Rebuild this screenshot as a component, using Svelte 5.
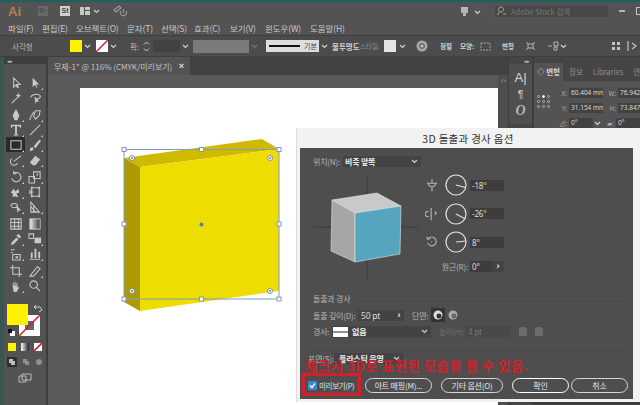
<script>
	const menus = ['파일(F)', '편집(E)', '오브젝트(O)', '문자(T)', '선택(S)', '효과(C)', '보기(V)', '윈도우(W)', '도움말(H)'];

	// s = stroked path, f = filled path, fly = has the little flyout corner
	const toolGroups = [
		[
			[
				{ s: 'M5 2v10l2.500-2.500 1.500 3 1-.5-1.500-3H12z' },
				{ f: 'M5 2v10l2.500-2.500 1.500 3 1-.5-1.500-3H12z', fly: true }
			],
			[
				{ s: 'M3 13l6-6', f: 'M10 2l1 2 2 1-2 1-1 2-1-2-2-1 2-1z' },
				{ s: 'M3 7c0-3 8-5 10-2 1 3-3 4-5 3', f: 'M7 6l5 5-3 .5-1 2.500z' }
			]
		],
		[
			[
				{ f: 'M7 2h1l3 6-2 5H6L4 8z', fly: true },
				{ s: 'M2 13c0-4 3-5 4-9M8 3l5 0-1 5-4 4-2-3z', fly: true }
			],
			[
				{ f: 'M2 2h11v3h-1l-1-1.500H8.500V12l1.500.5v1H5v-1l1.500-.5V3.500H4L3 5H2z', fly: true },
				{ s: 'M2 13L13 2', fly: true }
			],
			[
				{ s: 'M2 3h11v9H2z', on: true, fly: true },
				{ f: 'M2 14c0-3 1-4 3-4l1 2c-1 1-2 2-4 2zM6 9l6-7 2 1-6 8z', fly: true }
			],
			[
				{ s: 'M3 6a4 4 0 1 0 6 5M5 9l8-6', fly: true },
				{ f: 'M2 10l6-7 5 4-5 6H5z', fly: true }
			]
		],
		[
			[
				{ s: 'M3 9a5 5 0 1 0 2-5.500M5 1v3h3', fly: true },
				{ s: 'M1 7h6v7H1zM6 2h7v7H6zM9 6l2-2', fly: true }
			],
			[
				{ f: 'M2 8l3-4 2 3 3-3 1 4-3 1 2 4-4-1-2 1V9z', fly: true },
				{ s: 'M4 3h8v9H4zM2 6l3 1.500L2 9z', f: 'M3 2h2v2H3zM11 2h2v2h-2zM3 11h2v2H3zM11 11h2v2h-2z' }
			],
			[
				{ s: 'M2 6c0-3 7-3 7 0s-6 3-7 0', f: 'M8 6l5 5-3 .5-1 2.500z', fly: true },
				{ s: 'M3 2v11h10M3 2l9 11M3 7l5 6M6 13V6', fly: true }
			]
		],
		[
			[
				{ s: 'M2 2h11v11H2zM2 6h11M2 10h11M6 2v11M10 2v11' },
				{ s: 'M2 2h11v11H2z', grad: true }
			],
			[
				{ f: 'M2 14l1-3 5-5 2 2-5 5zM8 4l2-2 3 3-2 2z', fly: true },
				{ s: 'M1 2h5v5H1z', f: 'M7 6h7v6H7z', fly: true }
			],
			[
				{ s: 'M2 3h4M2 6h2M4 8h8v6H4z', f: 'M7 10h3v2H7z', fly: true },
				{ f: 'M2 13h11v1H2zM3 6h2v6H3zM7 2h2v10H7zM11 5h2v7h-2z', fly: true }
			]
		],
		[
			[
				{ s: 'M4 1v10h10M1 4h10v10' },
				{ s: 'M2 13l8-10 3 2-7 8z', fly: true }
			],
			[
				{ f: 'M4 8V4h1v3h1V3h1v4h1V4h1v5l2-1-1 3-2 3H5z', fly: true },
				{ s: 'M6 2a4 4 0 1 0 .1 0zM9 9l4 4' }
			]
		]
	];

	const ctrlRows = [
		{ label: 'X:', value: '60.404 mm', label2: 'W:', value2: '76.942' },
		{ label: 'Y:', value: '31.154 mm', label2: 'H:', value2: '73.847' }
	];

	const dials = [
		{ value: '-18°', x: 9.5, y: 2.5, icon: 'M2 6h12M8 1v5M4 6a4 4 0 0 0 8 0M8 10v5' },
		{ value: '-26°', x: 9.5, y: 5, icon: 'M7 1v14M4 5a4 3 0 0 0 0 6M11 5l2 2-2 2' },
		{ value: '8°', x: 10, y: -1, icon: 'M4 4a5 5 0 1 1-1 5M2 2l1 3 3-1M7 8h1' }
	];
</script>

<div class="app">
	<div class="teal"></div>

	<div class="title">
		<span class="ai">Ai</span>
		<span class="br">Br</span>
		<span class="st">St</span>
		<svg class="layout" width="10" height="8" viewBox="0 0 10 8"><path d="M0 0h4v8H0zM5 0h5v3H5zM5 4h5v4H5z" fill="#c8c8c8" /></svg>
		<svg class="chev" width="7" height="5" viewBox="0 0 7 5"><path d="M1 1l2.500 2.500L6 1" /></svg>
		<svg class="sync" width="14" height="12" viewBox="0 0 14 12"><path d="M1 5l5-4 2 2-5 4zM8 6a3 3 0 1 0 5 0M10.500 4v4" fill="none" stroke="#9a9a9a" stroke-width="1.200" /></svg>
		<span class="grow"></span>
		<svg width="7" height="9" viewBox="0 0 7 9"><path d="M0 0h7v6H5v3H2V6H0z" fill="#b5b5b5" /></svg>
		<svg class="chev chev-wide" width="7" height="5" viewBox="0 0 7 5"><path d="M1 1l2.500 2.500L6 1" /></svg>
		<div class="stock">
			<svg width="10" height="10" viewBox="0 0 10 10"><path d="M4 1a2.500 2.500 0 1 0 .1 0zM2 6l-1.500 3M6 8h3" fill="none" stroke="#a8a8a8" /></svg>
			<span>Adobe Stock 검색</span>
		</div>
		<span class="minimize"></span>
		<span class="maximize"></span>
	</div>

	<div class="menu">
		{#each menus as m}
			<span>{m}</span>
		{/each}
	</div>

	<div class="control">
		<span class="c-shape">사각형</span>
		<span class="swatch fill"></span>
		<svg class="chev c-chev" width="7" height="5" viewBox="0 0 7 5"><path d="M1 1l2.500 2.500L6 1" /></svg>
		<svg class="swatch-none" width="12" height="12" viewBox="0 0 12 12"><rect width="12" height="12" fill="#fff" /><path d="M0 12L12 0" stroke="#d21f2b" stroke-width="1.500" /></svg>
		<svg class="chev c-chev" width="7" height="5" viewBox="0 0 7 5"><path d="M1 1l2.500 2.500L6 1" /></svg>
		<span class="c-stroke">획:</span>
		<svg class="spin" width="7" height="11" viewBox="0 0 7 11"><path d="M1 3.500l2.500-2.500L6 3.500M1 7.500L3.500 10 6 7.500" fill="none" stroke="#cfcfcf" /></svg>
		<span class="c-input"></span>
		<svg class="chev" width="7" height="5" viewBox="0 0 7 5"><path d="M1 1l2.500 2.500L6 1" /></svg>
		<span class="c-grey"></span>
		<svg class="chev dim" width="7" height="5" viewBox="0 0 7 5"><path d="M1 1l2.500 2.500L6 1" /></svg>
		<div class="c-line"><i></i><span>기본</span></div>
		<svg class="chev" width="7" height="5" viewBox="0 0 7 5"><path d="M1 1l2.500 2.500L6 1" /></svg>
		<span class="c-label bold c-opacity">불투명도</span>
		<span class="c-label dimtext c-style">스타일:</span>
		<span class="c-style-swatch"></span>
		<svg class="chev" width="7" height="5" viewBox="0 0 7 5"><path d="M1 1l2.500 2.500L6 1" /></svg>
		<svg class="globe" width="12" height="12" viewBox="0 0 12 12"><circle cx="6" cy="6" r="5.500" fill="#a8a8a8" /><circle cx="6" cy="6" r="3" fill="#6d6d6d" /><circle cx="6" cy="6" r="1.500" fill="#bcbcbc" /></svg>
		<span class="c-label bold c-align">정렬</span>
		<span class="c-label bold c-form">모양:</span>
		<svg class="c-icon" width="11" height="9" viewBox="0 0 11 9"><path d="M1 1h9v7H1z" fill="none" stroke="#a5a5a5" stroke-dasharray="2 1" /></svg>
		<span class="c-label bold c-transform">변형</span>
		<svg class="c-icon c-icon-a" width="11" height="10" viewBox="0 0 11 10"><path d="M1 1l2 2h5l2-2M1 9l2-2h5l2 2M3 3v4M8 3v4" fill="none" stroke="#b5b5b5" /></svg>
		<svg class="c-icon c-icon-b" width="11" height="10" viewBox="0 0 11 10"><path d="M0 5h4M6 1h4v4H6zM6 6h3v3H6z" fill="none" stroke="#b5b5b5" /></svg>
		<svg class="chev" width="7" height="5" viewBox="0 0 7 5"><path d="M1 1l2.500 2.500L6 1" /></svg>
		<span class="grow"></span>
		<svg class="c-icon" width="8" height="8" viewBox="0 0 8 8"><path d="M0 0h3v3H0zM5 0h3v3H5zM0 5h3v3H0zM5 5h3v3H5z" fill="#c4c4c4" /></svg>
		<svg class="c-icon c-icon-end" width="10" height="10" viewBox="0 0 10 10"><path d="M1 0v10M5 2l4 3-4 3" fill="none" stroke="#c4c4c4" stroke-width="1.200" /></svg>
	</div>

	<div class="work">
		<div class="edge"></div>

		<aside class="tools">
			<div class="tools-head">◂▸</div>
			<div class="tools-sep"></div>
			{#each toolGroups as group}
				<div class="tool-group">
					{#each group as row}
						{#each row as t}
							<span class="tool" class:on={t.on} class:fly={t.fly}>
								<svg width="14" height="14" viewBox="0 0 15 15">
									{#if t.grad}
										<defs>
											<linearGradient id="tool-grad">
												<stop offset="0" stop-color="#eee" />
												<stop offset="1" stop-color="#333" />
											</linearGradient>
										</defs>
										<path d={t.s} fill="url(#tool-grad)" stroke="#c9c9c9" />
									{:else}
										{#if t.f}<path d={t.f} fill="#c9c9c9" />{/if}
										{#if t.s}<path d={t.s} fill="none" stroke="#c9c9c9" stroke-width="1.100" />{/if}
									{/if}
								</svg>
							</span>
						{/each}
					{/each}
				</div>
			{/each}

			<div class="colors">
				<span class="big-stroke">
					<svg width="21" height="21" viewBox="0 0 21 21"><rect width="21" height="21" fill="#fff" /><rect x="6" y="6" width="9" height="9" fill="#666" /><path d="M0 21L21 0" stroke="#d21f2b" stroke-width="1.500" /></svg>
				</span>
				<span class="big-fill"></span>
				<svg class="swap" width="9" height="8" viewBox="0 0 9 8"><path d="M1 2h5l2 3M2 0L0 2l2 2M5 7l3-2" fill="none" stroke="#d0d0d0" /></svg>
				<svg class="defaults" width="7" height="7" viewBox="0 0 7 7"><rect x="2" y="2" width="5" height="5" fill="#fff" /><rect width="4" height="4" fill="#111" /></svg>
			</div>

			<div class="mode-row">
				<span class="mini yellow"></span>
				<span class="mini gradient"></span>
				<svg width="8" height="8" viewBox="0 0 8 8"><rect width="8" height="8" fill="#fff" /><path d="M0 8L8 0" stroke="#d21f2b" stroke-width="1.600" /></svg>
			</div>
			<div class="mode-row draw">
				<span class="draw-on"><svg width="8" height="8" viewBox="0 0 8 8"><path d="M1 1h4v4H1zM3 3h4v4H3z" fill="#bdbdbd" /></svg></span>
				<svg width="8" height="8" viewBox="0 0 8 8"><path d="M1 1h4v4H1zM3 3h4v4H3z" fill="#8f8f8f" /></svg>
				<svg width="8" height="8" viewBox="0 0 8 8"><circle cx="4" cy="4" r="3" fill="#8f8f8f" /></svg>
			</div>
			<svg class="screen" width="14" height="10" viewBox="0 0 14 10"><path d="M4 1h9v6H4zM1 3h7v6H1z" fill="none" stroke="#b8b8b8" /></svg>
		</aside>

		<main class="doc">
			<div class="tabs">
				<div class="tab">
					<span>무제-1* @ 116% (CMYK/미리보기)</span>
					<b>×</b>
				</div>
			</div>
			<div class="canvas">
				<div class="artboard">
					<svg class="art" width="418" height="317" viewBox="80 88 418 317">
						<polygon points="124,158 262,139 279,149 140,167" fill="#cfba00" />
						<polygon points="124,158 140,167 140,311 124,302" fill="#ae9a00" />
						<polygon points="140,167 279,149 279,291 140,311" fill="#eedd00" />
						<rect x="124" y="149.500" width="155" height="149.500" fill="none" stroke="#7f9ac6" />
						{#each [[132, 158], [270, 158], [132, 291], [270, 291]] as [x, y]}
							<circle cx={x} cy={y} r="2.500" fill="#fff" stroke="#7f8fb5" />
							<circle cx={x} cy={y} r="1" fill="#6f7f9f" />
						{/each}
						{#each [[124, 149.5], [201.5, 149.5], [279, 149.5], [124, 224], [279, 224], [124, 299], [201.5, 299], [279, 299]] as [x, y]}
							<rect x={x - 2} y={y - 2} width="4" height="4" fill="#fff" stroke="#7f9ac6" />
						{/each}
						<circle cx="201.500" cy="224.500" r="2" fill="#5a7fa8" />
					</svg>
				</div>
				<div class="scroll">
					<svg width="7" height="5" viewBox="0 0 7 5"><path d="M1 4l2.500-2.500L6 4" fill="none" stroke="#8a8a8a" /></svg>
				</div>
			</div>
		</main>

		<div class="dock">
			<div class="dock-head">◂▸</div>
			<div class="dock-icons">
				<span class="d-a">A|</span>
				<span class="d-p">¶</span>
				<span class="d-o">O</span>
			</div>
		</div>

		<section class="panel">
			<div class="panel-tabs">
				<span class="p-tab active">◇ 변형</span>
				<span class="p-tab">정보</span>
				<span class="p-tab">Libraries</span>
				<span class="p-tab">연</span>
			</div>
			<div class="panel-body">
				<div class="ref">
					{#each Array(9) as _, i}
						<i class:sel={i === 1}></i>
					{/each}
				</div>
				<div class="fields">
					{#each ctrlRows as r}
						<div class="field-row">
							<label>{r.label}</label><span class="val">{r.value}</span>
							<label>{r.label2}</label><span class="val short">{r.value2}</span>
						</div>
					{/each}
					<div class="field-row">
						<label>⊿:</label><span class="val angle">0°</span>
						<svg class="chev" width="7" height="5" viewBox="0 0 7 5"><path d="M1 1l2.500 2.500L6 1" /></svg>
						<label class="shear">▰:</label><span class="val short">0°</span>
					</div>
				</div>
			</div>
		</section>
	</div>

	<div class="dialog">
		<h1>3D 돌출과 경사 옵션</h1>
		<div class="dialog-body">
			<div class="row pos-row">
				<span class="lbl">위치(N):</span>
				<div class="select pos">
					<span>비축 앞쪽</span>
					<svg class="chev" width="7" height="5" viewBox="0 0 7 5"><path d="M1 1l2.500 2.500L6 1" /></svg>
				</div>
			</div>

			<div class="preview-row">
				<div class="preview">
					<svg width="106" height="108" viewBox="313 172 106 108">
						<path d="M367 175v105M313 227h105" stroke="#3a3a3a" />
						<polygon points="332,200 377,193 401,206 355,213" fill="#c9c9c9" stroke="#e4e4e4" stroke-width=".6" />
						<polygon points="332,200 355,213 355,262 331,251" fill="#a6a6a6" stroke="#e4e4e4" stroke-width=".6" />
						<polygon points="355,213 401,206 400,254 355,262" fill="#56a5be" stroke="#dfe8ea" stroke-width=".6" />
					</svg>
				</div>
				<div class="dials">
					{#each dials as d}
						<div class="dial-row">
							<svg class="axis" width="14" height="14" viewBox="0 0 16 16"><path d={d.icon} fill="none" stroke="#b5b5b5" stroke-width="1.300" /></svg>
							<svg class="knob" width="24" height="24" viewBox="-12 -12 24 24">
								<circle r="10" fill="none" stroke="#e0e0e0" stroke-width="1.200" />
								<path d="M0 0L{d.x} {d.y}" stroke="#e0e0e0" stroke-width="1.200" />
							</svg>
							<span class="num">{d.value}</span>
						</div>
					{/each}
					<div class="persp">
						<span class="lbl">원근(R):</span>
						<span class="num short">0°</span>
						<span class="step">›</span>
					</div>
				</div>
			</div>

			<div class="group">
				<div class="group-title"><span class="lbl">돌출과 경사</span></div>
				<div class="row depth-row">
					<span class="lbl depth-lbl">돌출 깊이(D):</span>
					<span class="num depth">50 pt</span>
					<span class="step">›</span>
					<span class="lbl cap-lbl">단면:</span>
					<span class="cap on"><svg width="10" height="10" viewBox="0 0 10 10"><circle cx="5" cy="5" r="4.500" fill="#ddd" /><circle cx="6" cy="6" r="2.500" fill="#333" /></svg></span>
					<span class="cap"><svg width="10" height="10" viewBox="0 0 10 10"><circle cx="5" cy="5" r="4.500" fill="#aaa" /><circle cx="6" cy="6" r="2.500" fill="#666" /></svg></span>
				</div>
				<div class="row bevel-row">
					<span class="lbl bevel-lbl">경사:</span>
					<div class="select bevel">
						<svg width="15" height="10" viewBox="0 0 15 10"><rect width="15" height="10" fill="#fff" /><path d="M0 5h15" stroke="#222" /></svg>
						<span>없음</span>
						<svg class="chev" width="7" height="5" viewBox="0 0 7 5"><path d="M1 1l2.500 2.500L6 1" /></svg>
					</div>
					<span class="lbl off h-lbl">높이(H):</span>
					<span class="num off h-val">4 pt</span>
					<span class="off-shape"></span>
					<span class="off-shape"></span>
				</div>
			</div>

			<div class="row surface-row">
				<span class="lbl surface-lbl">표면(S):</span>
				<div class="select surface">
					<span>플라스틱 음영</span>
					<svg class="chev" width="7" height="5" viewBox="0 0 7 5"><path d="M1 1l2.500 2.500L6 1" /></svg>
				</div>
			</div>

			<div class="foot">
				<label class="check"><span class="box"><svg width="9" height="9" viewBox="0 0 9 9"><path d="M2 4.500l2 2 3-4" fill="none" stroke="#fff" stroke-width="1.300" /></svg></span>미리보기(P)</label>
				<button class="art-btn">아트 매핑(M)...</button>
				<button class="more-btn">기타 옵션(O)</button>
				<button class="ok-btn">확인</button>
				<button class="no-btn">취소</button>
			</div>
		</div>

		<div class="note">체크시 3D로 표현된 모습을 볼 수 있음.</div>
		<div class="redbox"></div>
	</div>
</div>

<style>
	:global(body) {
		margin: 0;
		background: #535353;
	}

	.app {
		position: relative;
		width: 640px;
		height: 405px;
		overflow: hidden;
		display: flex;
		flex-direction: column;
		background: #505050;
		color: #c8c8c8;
		font-family: 'Noto Sans CJK KR', 'Noto Sans', sans-serif;
		font-size: 8.5px;
	}

	svg {
		display: block;
		flex: none;
	}

	.grow {
		flex: 1;
	}

	.chev path {
		fill: none;
		stroke: #cfcfcf;
		stroke-width: 1.200;
	}

	.chev.dim path {
		stroke: #777;
	}

	.teal {
		height: 2px;
		background: #1f5f5c;
	}

	.title {
		height: 18px;
		display: flex;
		align-items: center;
		background: #535353;
		padding-left: 8px;
	}

	.ai {
		width: 30px;
		color: #b6814f;
		font: 700 13px 'Liberation Sans', sans-serif;
	}

	.br,
	.st {
		width: 10px;
		height: 10px;
		text-align: center;
		font: 700 7px/10px 'Liberation Sans', sans-serif;
	}

	.br {
		background: #6a6a6a;
		color: #4f4f4f;
		margin-right: 12px;
	}

	.st {
		background: #d0d0d0;
		color: #444;
		margin-right: 10px;
	}

	.layout {
		margin-right: 3px;
	}

	.chev-wide {
		margin: 2px 14px 0 6px;
	}

	.sync {
		margin-left: 13px;
	}

	.stock {
		width: 113px;
		height: 11px;
		display: flex;
		align-items: center;
		gap: 4px;
		padding-left: 2px;
		box-sizing: border-box;
		background: #484848;
		color: #777;
		font-size: 7.500px;
	}

	.minimize {
		width: 6px;
		height: 2px;
		background: #b5b5b5;
		margin: 0 11px 0 11px;
	}

	.maximize {
		width: 6px;
		height: 6px;
		border: 1px solid #c5c5c5;
		margin-right: -4px;
	}

	.menu {
		height: 15px;
		display: grid;
		grid-template-columns: 34px 34px 51px 34px 33px 36px 35px 45px auto;
		align-items: center;
		padding-left: 8px;
		background: #535353;
		border-bottom: 1px solid #3e3e3e;
		white-space: nowrap;
		letter-spacing: -0.1px;
	}

	.control {
		height: 20px;
		display: flex;
		align-items: center;
		padding-left: 12px;
		background: #4c4c4c;
		border-bottom: 1px solid #3e3e3e;
		white-space: nowrap;
		font-size: 7.500px;
	}

	.c-shape {
		width: 58px;
		color: #b5b5b5;
	}

	.swatch {
		width: 12px;
		height: 12px;
	}

	.fill {
		background: #fff200;
	}

	.c-chev {
		margin: 0 5px 0 2px;
	}

	.c-stroke {
		margin-left: 8px;
		width: 13px;
		color: #bbb;
	}

	.spin {
		margin-right: 3px;
	}

	.c-input {
		width: 27px;
		height: 12px;
		background: #424242;
		margin-right: 2px;
	}

	.c-grey {
		width: 56px;
		height: 13px;
		background: #7b7b7b;
		margin: 0 2px 0 4px;
	}

	.c-line {
		width: 53px;
		height: 12px;
		display: flex;
		align-items: center;
		background: #ddd;
		margin: 0 2px 0 8px;
		color: #444;
		font-size: 7px;
	}

	.c-line i {
		width: 31px;
		height: 2px;
		background: #111;
		margin: 0 4px 0 3px;
	}

	.c-label {
		color: #b8b8b8;
	}

	.bold {
		font-weight: 700;
		color: #cfcfcf;
	}

	.dimtext {
		color: #8f8f8f;
	}

	.c-opacity {
		width: 28px;
		margin-left: 4px;
	}

	.c-style {
		width: 24px;
		font-size: 6.500px;
	}

	.c-style-swatch {
		width: 12px;
		height: 12px;
		background: #e4e4e4;
		margin-right: 3px;
	}

	.globe {
		margin: 0 12px 0 10px;
	}

	.c-align {
		width: 12px;
		font-size: 6.500px;
	}

	.c-form {
		width: 14px;
		margin-left: 8px;
		font-size: 6.500px;
	}

	.c-icon {
		margin-left: 6px;
	}

	.c-transform {
		width: 13px;
		margin-left: 11px;
		font-size: 6.500px;
	}

	.c-icon-a {
		margin-left: 10px;
	}

	.c-icon-b {
		margin: 0 1px 0 12px;
	}

	.c-icon-end {
		margin: 0 3px 0 7px;
	}

	.work {
		flex: 1;
		min-height: 0;
		display: flex;
		background: #3d3d3d;
	}

	.edge {
		width: 4px;
		background: #3a5652;
	}

	.tools {
		width: 42px;
		display: flex;
		flex-direction: column;
		align-items: center;
		background: #535353;
		margin-right: 2px;
	}

	.tools-head {
		width: 100%;
		height: 7px;
		background: #3f3f3f;
		font-size: 5px;
		line-height: 7px;
		padding-left: 3px;
		box-sizing: border-box;
	}

	.tools-sep {
		height: 11px;
		flex: none;
	}

	.tool-group {
		display: grid;
		grid-template-columns: 19px 19px;
		grid-auto-rows: 15px;
		margin-bottom: 2px;
	}

	.tool {
		position: relative;
		display: flex;
		align-items: center;
		justify-content: center;
	}

	.tool.on {
		background: #2b2b2b;
	}

	.tool.fly::after {
		content: '';
		position: absolute;
		right: 1px;
		bottom: 0;
		border-left: 2px solid transparent;
		border-bottom: 2px solid #d0d0d0;
	}

	.colors {
		position: relative;
		width: 38px;
		height: 32px;
		margin-top: 9px;
		flex: none;
	}

	.big-fill {
		position: absolute;
		left: 1px;
		top: 0;
		width: 21px;
		height: 21px;
		background: #fff200;
	}

	.big-stroke {
		position: absolute;
		left: 13px;
		top: 11px;
	}

	.swap {
		position: absolute;
		left: 28px;
		top: 1px;
	}

	.defaults {
		position: absolute;
		left: 2px;
		top: 25px;
	}

	.mode-row {
		display: flex;
		justify-content: center;
		align-items: center;
		gap: 5px;
		margin-top: 6px;
		height: 10px;
	}

	.mini {
		width: 8px;
		height: 8px;
	}

	.yellow {
		background: #fff200;
	}

	.gradient {
		background: linear-gradient(90deg, #fff, #222);
	}

	.draw {
		margin-top: 4px;
		height: 11px;
	}

	.draw-on {
		background: #2e2e2e;
		padding: 1px 1px;
	}

	.screen {
		margin-top: 6px;
	}

	.doc {
		width: 460px;
		display: flex;
		flex-direction: column;
	}

	.tabs {
		height: 18px;
		background: #424242;
		flex: none;
	}

	.tab {
		width: 142px;
		height: 100%;
		display: flex;
		align-items: center;
		justify-content: space-between;
		padding: 0 6px;
		box-sizing: border-box;
		background: #535353;
		white-space: nowrap;
		color: #c0c0c0;
		font-size: 8px;
	}

	.tab b {
		color: #ddd;
		font: 700 9px 'Liberation Sans', sans-serif;
	}

	.canvas {
		flex: 1;
		display: flex;
		background: #5a5a5a;
		padding: 13px 0 0 32px;
		min-height: 0;
	}

	.artboard {
		width: 418px;
		background: #fff;
		overflow: hidden;
	}

	.scroll {
		width: 10px;
		margin-top: -13px;
		padding-top: 3px;
		background: #4e4e4e;
		display: flex;
		justify-content: center;
	}

	.dock {
		width: 23px;
		flex: none;
		margin-left: 1px;
		background: #454545;
	}

	.dock-head {
		height: 7px;
		font-size: 5px;
		line-height: 7px;
		text-align: right;
		padding-right: 2px;
	}

	.dock-icons {
		display: flex;
		flex-direction: column;
		align-items: center;
		background: #4f4f4f;
		height: 60px;
		padding-top: 6px;
		box-sizing: border-box;
	}

	.d-a {
		font: 400 13px/16px 'Liberation Sans', sans-serif;
		color: #d8d8d8;
	}

	.d-p {
		font: 700 10px/17px 'Liberation Sans', sans-serif;
		color: #bbb;
	}

	.d-o {
		font: italic 700 14px/16px 'Liberation Serif', serif;
		color: #b5b5b5;
	}

	.panel {
		flex: 1;
		margin-left: 2px;
		background: #535353;
		min-width: 0;
		height: 71px;
		overflow: hidden;
	}

	.panel-tabs {
		height: 24px;
		padding-top: 6px;
		box-sizing: border-box;
		display: flex;
		background: #454545;
		white-space: nowrap;
	}

	.p-tab {
		padding: 0 5px;
		line-height: 18px;
		font-size: 7.500px;
		color: #8f8f8f;
	}

	.p-tab.active {
		width: 30px;
		box-sizing: border-box;
		background: #535353;
		color: #d5d5d5;
		font-weight: 700;
		padding: 0 3px;
		margin-right: 1px;
	}

	.panel-body {
		display: flex;
		padding: 7px 0 0 3px;
	}

	.ref {
		width: 13px;
		height: 13px;
		margin-top: 7px;
		display: grid;
		grid-template-columns: repeat(3, 3px);
		grid-auto-rows: 3px;
		gap: 2px;
		flex: none;
	}

	.ref i {
		border: 1px solid #b5b5b5;
		box-sizing: border-box;
		border-radius: 50%;
	}

	.ref i.sel {
		background: #fff;
		border-color: #fff;
	}

	.fields {
		margin-left: 8px;
		display: flex;
		flex-direction: column;
		gap: 5px;
		white-space: nowrap;
	}

	.field-row {
		height: 10px;
		display: flex;
		align-items: center;
		font-size: 6.500px;
	}

	.field-row label {
		width: 9px;
		text-align: right;
		color: #aaa;
		margin-right: 2px;
	}

	.field-row label:nth-of-type(2) {
		margin-left: 5px;
		width: 8px;
	}

	.val {
		width: 34px;
		height: 10px;
		padding-left: 2px;
		box-sizing: border-box;
		background: #424242;
		color: #d5d5d5;
		overflow: hidden;
		font: 6.500px/10px 'Noto Sans', sans-serif;
	}

	.val.short {
		width: 30px;
	}

	.val.angle {
		width: 24px;
		margin-right: 1px;
	}

	.dialog {
		position: absolute;
		left: 296px;
		top: 128px;
		width: 344px;
		height: 274px;
		background: #f2f2f2;
		color: #c4c4c4;
		border-left: 1px solid #ddd;
		box-sizing: border-box;
		padding: 0 7px 3px 3px;
		display: flex;
		flex-direction: column;
	}

	h1 {
		margin: 0;
		height: 20px;
		line-height: 21px;
		text-align: center;
		font-size: 10.500px;
		font-weight: 400;
		color: #333;
		letter-spacing: 0.3px;
		padding-left: 3px;
	}

	.dialog-body {
		flex: 1;
		background: #4e4e4e;
		padding: 8px 5px 0 13px;
		min-height: 0;
		display: flex;
		flex-direction: column;
		font-size: 8px;
		letter-spacing: -0.2px;
	}

	.row {
		display: flex;
		align-items: center;
		white-space: nowrap;
	}

	.lbl {
		color: #b5b5b5;
	}

	.select {
		display: flex;
		align-items: center;
		height: 11px;
		box-sizing: border-box;
		background: #434343;
		color: #eee;
		font-weight: 700;
	}

	.select .chev {
		margin-left: auto;
		margin-right: 3px;
	}

	.pos-row .lbl {
		width: 30px;
	}

	.pos {
		width: 78px;
		padding-left: 2px;
	}

	.pos-row {
		height: 11px;
		flex: none;
	}

	.preview-row {
		display: flex;
		margin-top: 5px;
		height: 108px;
		flex: none;
	}

	.preview {
		width: 106px;
		background-image: radial-gradient(#5a5a5a 0.5px, transparent 0.6px);
		background-size: 4px 4px;
	}

	.dials {
		margin-top: -1px;
		padding-left: 6px;
		width: 79px;
	}

	.dial-row {
		height: 28.500px;
		display: flex;
		align-items: center;
	}

	.axis {
		margin-right: 5px;
	}

	.knob {
		margin-right: 2px;
	}

	.num {
		width: 34px;
		height: 11px;
		padding-left: 2px;
		box-sizing: border-box;
		background: #3d3d3d;
		color: #ddd;
		font: 8px/11px 'Noto Sans', sans-serif;
	}

	.persp {
		display: flex;
		align-items: center;
		justify-content: flex-end;
		white-space: nowrap;
		margin-top: 4px;
	}

	.persp .lbl {
		margin-right: 2px;
	}

	.num.short {
		width: 22px;
	}

	.step {
		width: 12px;
		height: 11px;
		text-align: center;
		background: #434343;
		color: #eee;
		font: 700 9px/10px 'Liberation Sans', sans-serif;
	}

	.group {
		margin-top: 12px;
		height: 53px;
		border-bottom: 1px solid #555;
		flex: none;
	}

	.group-title {
		height: 13px;
		display: flex;
		align-items: center;
	}

	.group-title::after {
		content: '';
		flex: 1;
		height: 1px;
		background: #555;
		margin-left: 4px;
	}

	.depth-row {
		margin-top: 2px;
		height: 16px;
	}

	.depth-lbl {
		width: 45px;
	}

	.depth {
		width: 36px;
		font-size: 8.500px;
		padding-left: 3px;
		background: #434343;
	}

	.depth-row .step {
		width: 10px;
	}

	.cap-lbl {
		width: 18px;
		margin-left: 8px;
	}

	.cap {
		width: 14px;
		height: 14px;
		display: flex;
		align-items: center;
		justify-content: center;
		margin-left: 1px;
	}

	.cap.on {
		background: #333;
	}

	.bevel-row {
		height: 17px;
	}

	.bevel-lbl {
		width: 19px;
	}

	.bevel {
		width: 99px;
		height: 12px;
		padding-left: 1px;
		gap: 4px;
	}

	.off {
		color: #6f6f6f;
	}

	.h-lbl {
		margin-left: 8px;
		width: 27px;
		font-size: 7.500px;
	}

	.h-val {
		width: 44px;
		background: #484848;
		color: #777;
	}

	.off-shape {
		width: 8px;
		height: 9px;
		background: #6b6b6b;
		border-radius: 3px 3px 0 0;
		margin-left: 9px;
	}

	.off-shape:last-child {
		margin-left: 8px;
	}

	.surface-row {
		margin: 7px 0 0 -5px;
		height: 11px;
		flex: none;
	}

	.surface-lbl {
		width: 26px;
	}

	.surface {
		width: 69px;
		padding-left: 5px;
	}

	.foot {
		display: flex;
		align-items: center;
		margin: 14px 0 0 -5px;
		height: 15px;
		white-space: nowrap;
		flex: none;
	}

	.check {
		width: 57px;
		display: flex;
		align-items: center;
		gap: 2px;
		color: #e2e2e2;
		font-size: 7.500px;
		letter-spacing: -0.3px;
	}

	.box {
		width: 9px;
		height: 9px;
		flex: none;
		background: #3f86d0;
		border-radius: 1px;
	}

	button {
		height: 15px;
		padding: 0;
		border: 1px solid #d5d5d5;
		border-radius: 8px;
		background: transparent;
		color: #e5e5e5;
		font: inherit;
		letter-spacing: inherit;
		white-space: nowrap;
	}

	.art-btn {
		width: 67px;
	}

	.more-btn {
		width: 62px;
		margin-left: 9px;
	}

	.ok-btn {
		width: 57px;
		margin-left: 9px;
		border: 1.500px solid #fff;
	}

	.no-btn {
		width: 57px;
		margin-left: 2px;
	}

	.note {
		position: absolute;
		left: 8px;
		top: 228px;
		color: #d5202b;
		font-size: 13.500px;
		font-weight: 700;
		line-height: 18px;
		white-space: nowrap;
		letter-spacing: 0.4px;
	}

	.redbox {
		position: absolute;
		left: 5px;
		top: 245px;
		width: 59px;
		height: 23px;
		box-sizing: border-box;
		border: 3px solid #d51f2a;
	}
</style>
